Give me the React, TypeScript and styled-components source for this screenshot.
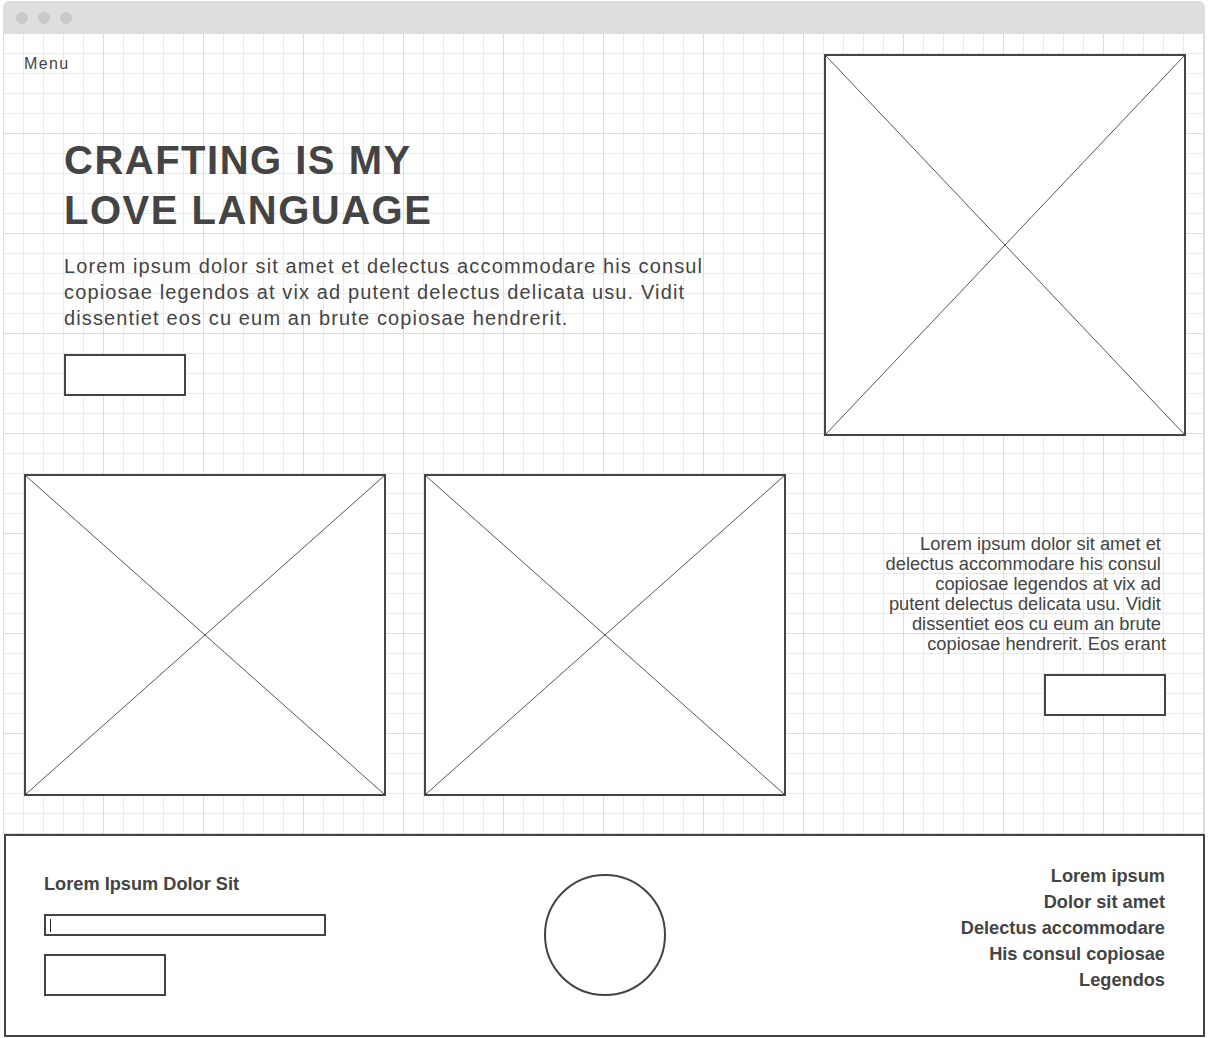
import styled, { createGlobalStyle } from "styled-components";

const GlobalStyle = createGlobalStyle`
  body {
    margin: 0;
    background: #ffffff;
    font-family: "Liberation Sans", Arial, sans-serif;
    color: #444444;
  }
  * {
    box-sizing: border-box;
  }
`;

const Placeholder = ({ w, h }: { w: number; h: number }): JSX.Element => {
  return (
    <ImageBox $w={w} $h={h}>
      <svg viewBox="0 0 100 100" preserveAspectRatio="none">
        <line x1="0" y1="0" x2="100" y2="100" />
        <line x1="100" y1="0" x2="0" y2="100" />
      </svg>
    </ImageBox>
  );
};

const App = (): JSX.Element => {
  return (
    <>
      <GlobalStyle />
      <Window>
        <TitleBar>
          <Dot />
          <Dot />
          <Dot />
        </TitleBar>
        <Canvas>
          <TopRow>
            <HeroColumn>
              <Menu>Menu</Menu>
              <Hero>
                <h1>
                  CRAFTING IS MY
                  <br />
                  LOVE LANGUAGE
                </h1>
                <p>
                  Lorem ipsum dolor sit amet et delectus accommodare his consul
                  copiosae legendos at vix ad putent delectus delicata usu.
                  Vidit dissentiet eos cu eum an brute copiosae hendrerit.
                </p>
                <Button />
              </Hero>
            </HeroColumn>
            <Placeholder w={362} h={382} />
          </TopRow>
          <SecondRow>
            <Placeholder w={362} h={322} />
            <Placeholder w={362} h={322} />
            <SideColumn>
              <SideText>
                {"Lorem ipsum dolor sit amet et "}
                <br />
                {"delectus accommodare his consul "}
                <br />
                {"copiosae legendos at vix ad "}
                <br />
                {"putent delectus delicata usu. Vidit "}
                <br />
                {"dissentiet eos cu eum an brute "}
                <br />
                {"copiosae hendrerit. Eos erant"}
              </SideText>
              <Button />
            </SideColumn>
          </SecondRow>
        </Canvas>
        <Footer>
          <FooterForm>
            <h4>Lorem Ipsum Dolor Sit</h4>
            <FakeInput />
            <Button />
          </FooterForm>
          <Circle />
          <FooterLinks>
            <li>Lorem ipsum</li>
            <li>Dolor sit amet</li>
            <li>Delectus accommodare</li>
            <li>His consul copiosae</li>
            <li>Legendos</li>
          </FooterLinks>
        </Footer>
      </Window>
    </>
  );
};
export default App;

const Window = styled.div`
  width: 1202px;
  margin-left: 3px;
  padding-top: 1px;
`;

const TitleBar = styled.div`
  height: 32px;
  display: flex;
  align-items: center;
  gap: 10px;
  padding: 2px 0 0 13px;
  background: #dedede;
  border-radius: 6px 6px 0 0;
`;

const Dot = styled.span`
  width: 12px;
  height: 12px;
  border-radius: 50%;
  background: #c9c9c9;
`;

const Canvas = styled.div`
  padding: 21px 18px 38px 20px;
  border-left: 1px solid #dddddd;
  border-right: 1px solid #dddddd;
  background:
    linear-gradient(to right, #dcdcdc 1px, transparent 1px) -1px 0 / 100px 100px,
    linear-gradient(to bottom, #dcdcdc 1px, transparent 1px) -1px 0 / 100px 100px,
    linear-gradient(to right, #eaeaea 1px, transparent 1px) -1px 0 / 20px 20px,
    linear-gradient(to bottom, #eaeaea 1px, transparent 1px) -1px 0 / 20px 20px,
    #ffffff;
`;

const TopRow = styled.div`
  display: flex;
  justify-content: space-between;
  align-items: flex-start;
`;

const HeroColumn = styled.div`
  display: flex;
  flex-direction: column;
`;

const Menu = styled.div`
  margin-top: 1px;
  font-size: 16px;
  line-height: 18px;
  letter-spacing: 1.4px;
  color: #444444;
`;

const Hero = styled.div`
  margin: 62px 0 0 40px;
  h1 {
    margin: 0;
    font-size: 40px;
    line-height: 50px;
    font-weight: 700;
    letter-spacing: 1.5px;
    color: #444444;
  }
  p {
    margin: 18px 0 23px;
    max-width: 690px;
    font-size: 20px;
    line-height: 26px;
    letter-spacing: 1.13px;
    color: #444444;
  }
`;

const Button = styled.div`
  width: 122px;
  height: 42px;
  border: 2px solid #444444;
  background: #ffffff;
`;

const ImageBox = styled.div<{ $w: number; $h: number }>`
  width: ${(p) => p.$w}px;
  height: ${(p) => p.$h}px;
  flex-shrink: 0;
  border: 2px solid #444444;
  background: #ffffff;
  svg {
    display: block;
    width: 100%;
    height: 100%;
  }
  line {
    stroke: #555555;
    stroke-width: 1;
    vector-effect: non-scaling-stroke;
  }
`;

const SecondRow = styled.div`
  display: flex;
  gap: 38px;
  margin-top: 38px;
`;

const SideColumn = styled.div`
  flex: 1;
  display: flex;
  flex-direction: column;
  align-items: flex-end;
  gap: 20px;
  padding: 60px 20px 0 0;
`;

const SideText = styled.div`
  font-size: 18.3px;
  line-height: 20px;
  text-align: right;
  white-space: break-spaces;
  color: #444444;
`;

const Footer = styled.footer`
  height: 203px;
  margin-left: 1px;
  display: grid;
  grid-template-columns: 1fr auto 1fr;
  align-items: end;
  padding: 0 38px 39px;
  border: 2px solid #444444;
  background: #ffffff;
`;

const FooterForm = styled.div`
  display: flex;
  flex-direction: column;
  h4 {
    margin: 0 0 19px;
    font-size: 18.2px;
    line-height: 22px;
    font-weight: 700;
    color: #444444;
  }
  ${Button} {
    margin-top: 18px;
  }
`;

const FakeInput = styled.div`
  position: relative;
  width: 282px;
  height: 22px;
  border: 2px solid #444444;
  &::after {
    content: "";
    position: absolute;
    left: 4px;
    top: 3px;
    width: 1px;
    height: 13px;
    background: #222222;
  }
`;

const Circle = styled.div`
  width: 122px;
  height: 122px;
  border: 2px solid #444444;
  border-radius: 50%;
  justify-self: center;
`;

const FooterLinks = styled.ul`
  justify-self: end;
  margin: 0 0 3px;
  padding: 0;
  list-style: none;
  text-align: right;
  font-size: 18.2px;
  line-height: 26px;
  font-weight: 700;
  color: #444444;
`;
